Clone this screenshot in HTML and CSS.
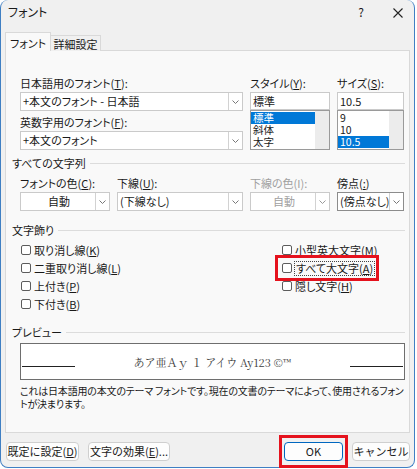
FILE: index.html
```html
<!DOCTYPE html>
<html lang="ja">
<head>
    <meta charset="UTF-8">
    <title>フォント</title>
    <link rel="stylesheet" href="styles.css">
</head>
<body>
    <div class="window">
        <div class="titlebar">
            <span class="title">フォント</span>
            <span class="help">?</span>
            <svg class="close" width="10" height="10" viewBox="0 0 10 10"><path d="M0.5 0.5 L9.5 9.5 M9.5 0.5 L0.5 9.5" stroke="#222" stroke-width="1.1" fill="none"/></svg>
        </div>

        <div class="tabs">
            <div class="tab active">フォント</div>
            <div class="tab">詳細設定</div>
        </div>

        <div class="panel">
            <div class="grid font-grid">
                <div class="field face">
                    <div class="label">日本語用のフォント(<u>T</u>):</div>
                    <div class="combo">
                        <span class="value">+本文のフォント - 日本語</span>
                        <span class="drop"><svg width="7" height="4" viewBox="0 0 7 4"><path d="M0.5 0.5 L3.5 3.5 L6.5 0.5" fill="none" stroke="#777"/></svg></span>
                    </div>
                    <div class="label next">英数字用のフォント(<u>F</u>):</div>
                    <div class="combo">
                        <span class="value">+本文のフォント</span>
                        <span class="drop"><svg width="7" height="4" viewBox="0 0 7 4"><path d="M0.5 0.5 L3.5 3.5 L6.5 0.5" fill="none" stroke="#777"/></svg></span>
                    </div>
                </div>
                <div class="field">
                    <div class="label">スタイル(<u>Y</u>):</div>
                    <div class="edit">標準</div>
                    <div class="list">
                        <div class="items">
                            <div class="item sel">標準</div>
                            <div class="item">斜体</div>
                            <div class="item">太字</div>
                        </div>
                        <div class="scroll"></div>
                    </div>
                </div>
                <div class="field">
                    <div class="label">サイズ(<u>S</u>):</div>
                    <div class="edit">10.5</div>
                    <div class="list">
                        <div class="items">
                            <div class="item">9</div>
                            <div class="item">10</div>
                            <div class="item sel">10.5</div>
                        </div>
                        <div class="scroll"></div>
                    </div>
                </div>
            </div>

            <div class="section">すべての文字列</div>
            <div class="grid effects-grid">
                <div class="field">
                    <div class="label">フォントの色(<u>C</u>):</div>
                    <div class="combo">
                        <span class="value center">自動</span>
                        <span class="drop"><svg width="7" height="4" viewBox="0 0 7 4"><path d="M0.5 0.5 L3.5 3.5 L6.5 0.5" fill="none" stroke="#777"/></svg></span>
                    </div>
                </div>
                <div class="field">
                    <div class="label">下線(<u>U</u>):</div>
                    <div class="combo">
                        <span class="value">(下線なし)</span>
                        <span class="drop"><svg width="7" height="4" viewBox="0 0 7 4"><path d="M0.5 0.5 L3.5 3.5 L6.5 0.5" fill="none" stroke="#777"/></svg></span>
                    </div>
                </div>
                <div class="field disabled">
                    <div class="label">下線の色(I):</div>
                    <div class="combo">
                        <span class="value center">自動</span>
                        <span class="drop"><svg width="7" height="4" viewBox="0 0 7 4"><path d="M0.5 0.5 L3.5 3.5 L6.5 0.5" fill="none" stroke="#999"/></svg></span>
                    </div>
                </div>
                <div class="field">
                    <div class="label">傍点(<u>:</u>)</div>
                    <div class="combo dark">
                        <span class="value">(傍点なし)</span>
                        <span class="drop"><svg width="7" height="4" viewBox="0 0 7 4"><path d="M0.5 0.5 L3.5 3.5 L6.5 0.5" fill="none" stroke="#777"/></svg></span>
                    </div>
                </div>
            </div>

            <div class="section">文字飾り</div>
            <div class="checks">
                <div class="col">
                    <div class="check"><span class="box"></span><span>取り消し線(<u>K</u>)</span></div>
                    <div class="check"><span class="box"></span><span>二重取り消し線(<u>L</u>)</span></div>
                    <div class="check"><span class="box"></span><span>上付き(<u>P</u>)</span></div>
                    <div class="check"><span class="box"></span><span>下付き(<u>B</u>)</span></div>
                </div>
                <div class="col">
                    <div class="check"><span class="box"></span><span>小型英大文字(<u>M</u>)</span></div>
                    <div class="check marked"><span class="box"></span><span class="focus">すべて大文字(<u>A</u>)</span><span class="mark"></span></div>
                    <div class="check"><span class="box"></span><span>隠し文字(<u>H</u>)</span></div>
                </div>
            </div>

            <div class="section">プレビュー</div>
            <div class="preview">
                <span class="rule"></span>
                <span class="sample">あア亜Ａｙ １ アイウ Ay123 ©™</span>
                <span class="rule"></span>
            </div>
            <p class="note">これは日本語用の本文のテーマ フォントです。現在の文書のテーマによって、使用されるフォントが決まります。</p>
        </div>

        <div class="footer">
            <button class="btn wide">既定に設定(<u>D</u>)</button>
            <button class="btn effects">文字の効果(<u>E</u>)...</button>
            <button class="btn ok">OK<span class="mark"></span></button>
            <button class="btn cancel">キャンセル</button>
        </div>
    </div>
</body>
</html>
```

FILE: styles.css
```css
body {
    margin: 0;
    background: #fff;
    font-family: "Noto Sans CJK JP", sans-serif;
    font-size: 11px;
    font-feature-settings: "palt";
    color: #1a1a1a;
}
.window {
    width: 415px;
    height: 468px;
    box-sizing: border-box;
    background: #f0f0f0;
    border: 1px solid #3f7fc3;
    border-top: 0;
    border-radius: 8px;
}
.titlebar {
    height: 32px;
    box-sizing: border-box;
    display: flex;
    padding: 5px 0 0 7px;
}
.title {
    flex: 1;
    font-size: 12px;
    line-height: 14px;
}
.help {
    font-size: 12px;
    line-height: 14px;
    margin-right: 29px;
}
.close {
    margin: 3px 11px 0 0;
}
.tabs {
    display: flex;
    align-items: flex-end;
    height: 19px;
    margin: 0 0 -1px 4px;
}
.tab {
    box-sizing: border-box;
    height: 16px;
    width: 50px;
    padding-top: 1px;
    line-height: 14px;
    text-align: center;
    background: #f0f0f0;
    border: 1px solid #d9d9d9;
    border-left: 0;
    border-bottom: 0;
}
.tab.active {
    position: relative;
    height: 19px;
    width: 46px;
    padding-top: 3px;
    background: #f9f9f9;
    border-left: 1px solid #d9d9d9;
}
.panel {
    width: 405px;
    height: 383px;
    box-sizing: border-box;
    margin-left: 4px;
    padding: 25px 4px 0 6px;
    background: #f9f9f9;
    border: 1px solid #d9d9d9;
}
.grid {
    display: grid;
    grid-template-columns: 90px 126px 80px 67px;
    column-gap: 7px;
    margin-left: 8px;
}
.face {
    grid-column: span 2;
}
.label {
    height: 14px;
    line-height: 14px;
    white-space: nowrap;
}
.label.next {
    margin-top: 4px;
}
.disabled .label,
.disabled .value {
    color: #a0a0a0;
}
.combo {
    display: flex;
    height: 19px;
    box-sizing: border-box;
    margin-top: 2px;
    background: #fff;
    border: 1px solid #cacaca;
}
.combo.dark {
    border-color: #8c8c8c;
}
.value {
    flex: 1;
    padding-left: 2px;
    line-height: 17px;
    white-space: nowrap;
    overflow: hidden;
}
.value.center {
    text-align: center;
}
.drop {
    width: 13px;
    display: flex;
    align-items: center;
    justify-content: center;
    border-left: 1px solid #d2d2d2;
}
.edit {
    height: 18px;
    box-sizing: border-box;
    margin-top: 2px;
    padding-left: 2px;
    line-height: 16px;
    background: #fff;
    border: 1px solid #cacaca;
}
.list {
    display: flex;
    height: 40px;
    box-sizing: border-box;
    background: #fff;
    border: 1px solid #9a9a9a;
}
.items {
    flex: 1;
    padding-top: 1px;
}
.item {
    height: 12px;
    font-size: 10.5px;
    line-height: 12px;
    padding-left: 2px;
}
.item.sel {
    background: #0078d7;
    color: #fff;
}
.scroll {
    width: 14px;
    background: #ececec;
}
.section {
    display: flex;
    align-items: center;
    gap: 4px;
    height: 14px;
    line-height: 14px;
    margin-top: 6px;
}
.section::after {
    content: "";
    flex: 1;
    border-top: 1px solid #dcdcdc;
    margin-top: 1px;
}
.effects-grid {
    margin-top: 6px;
}
.section + .checks {
    margin-top: 4px;
}
.effects-grid + .section,
.checks + .section {
    margin-top: 12px;
}
.checks {
    display: grid;
    grid-template-columns: 261px auto;
    margin-left: 8px;
}
.check {
    position: relative;
    display: flex;
    align-items: center;
    gap: 3px;
    width: fit-content;
    height: 18px;
    white-space: nowrap;
}
.box {
    width: 10px;
    height: 10px;
    box-sizing: border-box;
    margin-left: 1px;
    background: #fff;
    border: 1px solid #5c5c5c;
    border-radius: 2px;
}
.focus {
    line-height: 13px;
    outline: 1px dotted #444;
    padding: 0 1px;
}
.mark {
    position: absolute;
    border: 3px solid #e5121d;
}
.marked .mark {
    left: -6px;
    right: -5px;
    top: -4px;
    bottom: -4px;
}
.preview {
    display: flex;
    align-items: baseline;
    justify-content: space-between;
    height: 37px;
    box-sizing: border-box;
    margin: 4px 0 0 8px;
    padding: 11px 1px 0;
    background: #fff;
    border: 1px solid #6e6e6e;
}
.rule {
    width: 53px;
    height: 1px;
    background: #222;
}
.sample {
    font-family: "Noto Serif CJK JP", "Liberation Serif", "Noto Sans CJK JP", serif;
    font-size: 11px;
    font-feature-settings: normal;
    line-height: 14px;
    color: #3c3c3c;
}
.note {
    margin: 4px 0 0 8px;
    font-size: 10px;
    letter-spacing: -0.2px;
    line-height: 13px;
}
.footer {
    display: flex;
    gap: 9px;
    padding: 9px 4px 0 5px;
}
.btn {
    position: relative;
    height: 19px;
    box-sizing: border-box;
    padding: 0;
    font-family: inherit;
    font-size: 11px;
    line-height: 17px;
    color: #1a1a1a;
    background: #fdfdfd;
    border: 1px solid #cfcfcf;
    border-radius: 4px;
}
.wide {
    width: 73px;
}
.effects {
    width: 82px;
}
.ok {
    width: 59px;
    margin-left: auto;
    border-color: #0067c0;
}
.cancel {
    width: 58px;
}
.ok .mark {
    left: -6px;
    right: -6px;
    top: -8px;
    bottom: -8px;
}
```
